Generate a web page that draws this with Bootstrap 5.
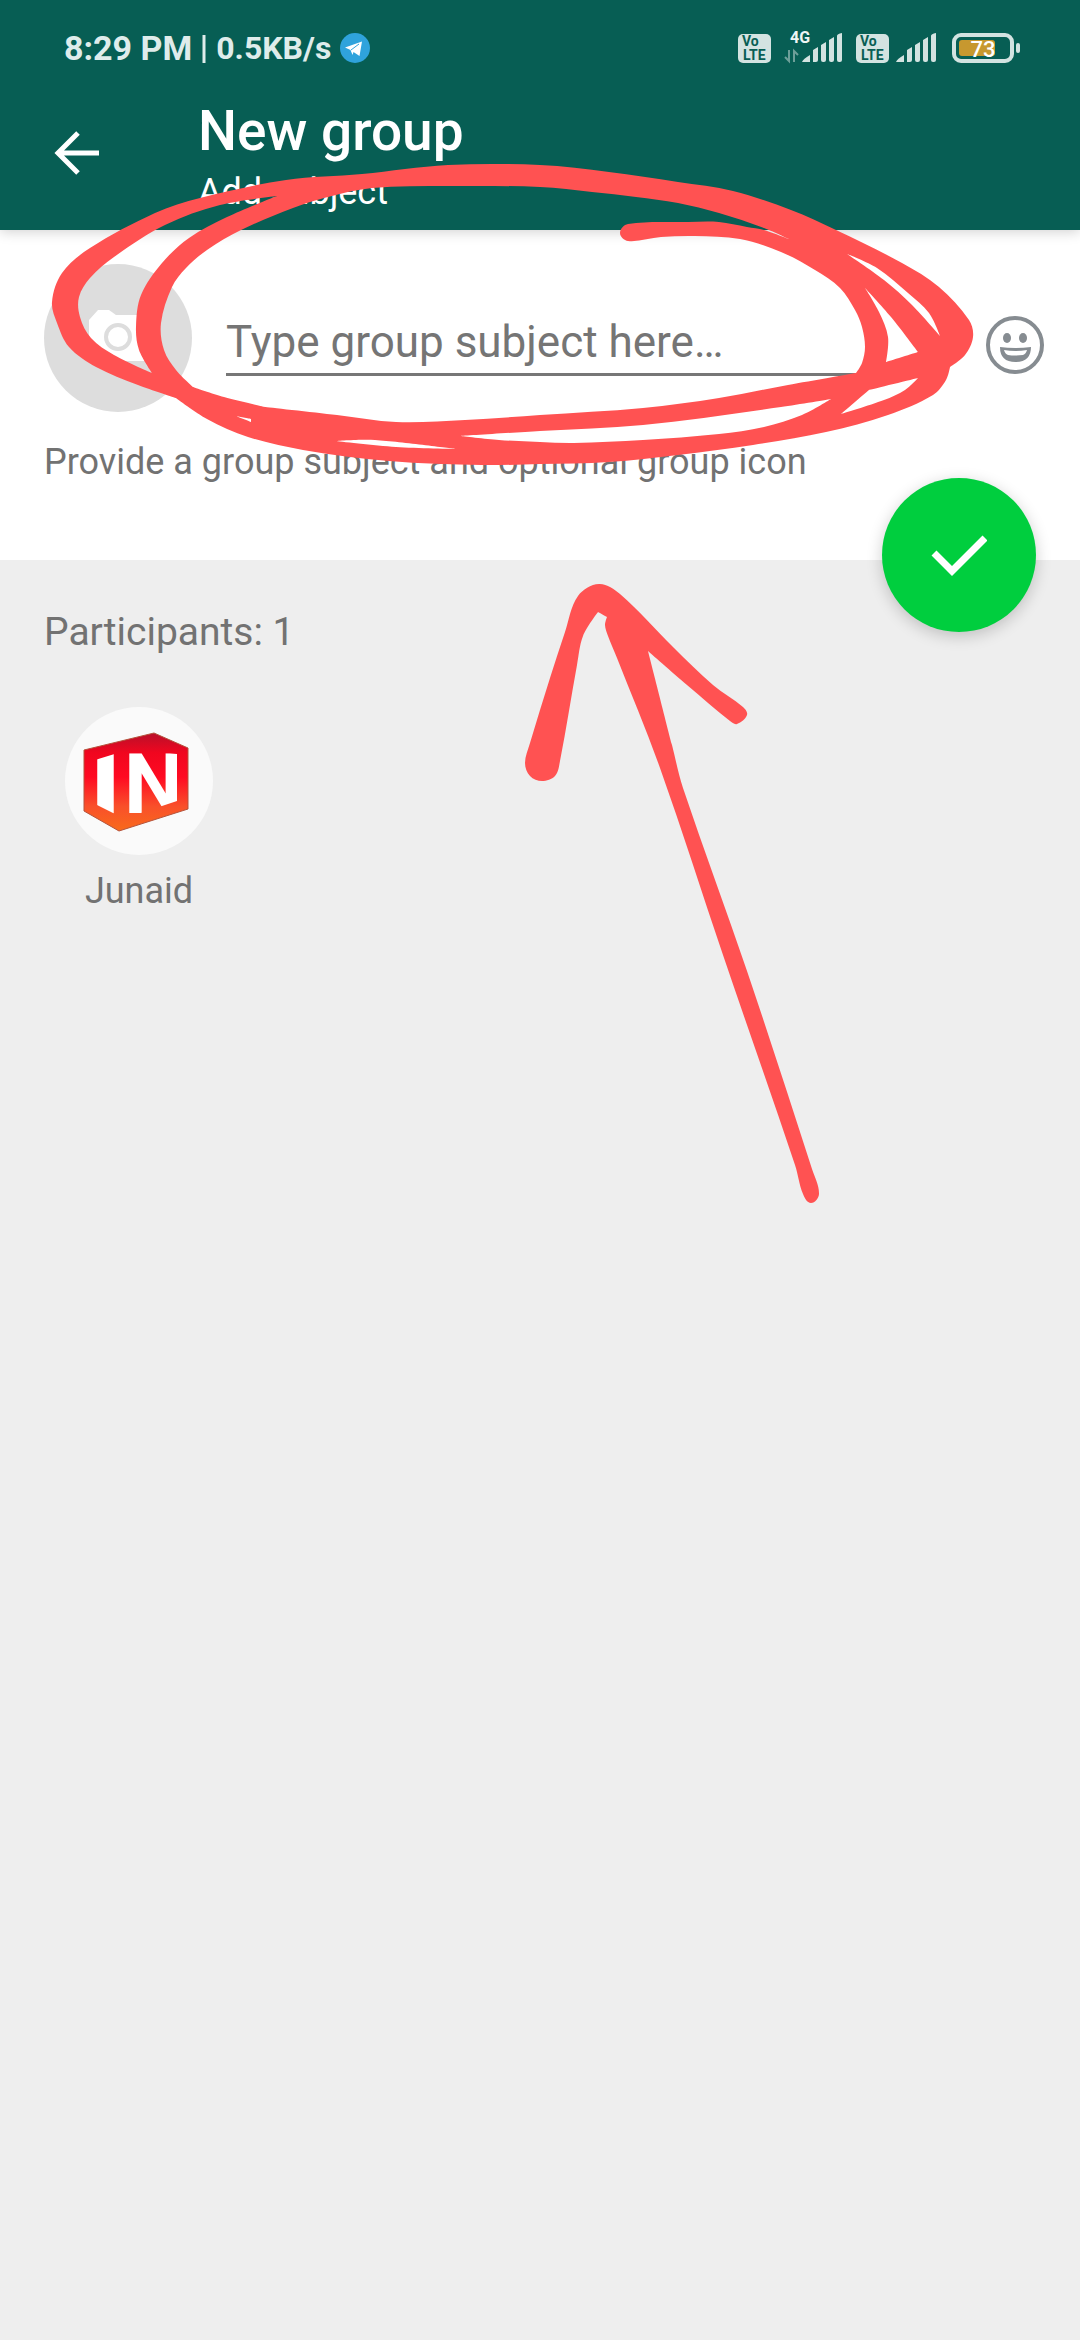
<!DOCTYPE html>
<html lang="en">
<head>
<meta charset="utf-8">
<meta name="viewport" content="width=device-width, initial-scale=1">
<title>New group</title>
<link href="https://cdn.jsdelivr.net/npm/bootstrap@5.3.0/dist/css/bootstrap.min.css" rel="stylesheet">
<style>
  body { font-family: Roboto, "Noto Sans", sans-serif; background: #eee; color: #727272; }
  svg { display: block; flex: none; }
  .app-top { background: #075e54; color: #fff; box-shadow: 0 2px 12px rgba(0,0,0,.18); z-index: 1; }
  .status-bar { height: 96px; padding: 0 58px 0 64px; color: #dfeceb; font-weight: 700; }
  .clock { font-size: 34px; }
  .net-speed { font-size: 32px; }
  .title-bar { padding: 0 44px 12px 40px; }
  .back-btn { width: 74px; height: 114px; padding: 0; border: 0; background: none; margin-right: 84px; }
  .bar-title { font-size: 55px; line-height: 70px; font-weight: 500; margin: 0; }
  .bar-sub { font-size: 36px; line-height: 52px; margin: 0; }
  .subject-panel { background: #fff; padding: 34px 36px 74px 44px; }
  .photo-btn { width: 148px; height: 148px; padding: 0; border: 0; background: #ddd; margin-right: 34px; }
  .subject-input { min-width: 0; height: 60px; padding: 0 0 6px; border: 0; border-bottom: 3px solid #777; border-radius: 0; background: none; font-size: 44px; line-height: 52px; color: #222; outline: 0; margin-right: 56px; }
  .subject-input::placeholder { color: #757575; opacity: 1; }
  .emoji-btn { padding: 0; border: 0; background: none; }
  .hint-text { font-size: 36px; line-height: 48px; margin: 26px 0 0; }
  .done-btn { position: absolute; right: 44px; bottom: -72px; width: 154px; height: 154px; border: 0; padding: 0; background: #00ce3e; box-shadow: 0 4px 16px rgba(0,0,0,.2); z-index: 1; }
  .people { padding: 48px 44px; }
  .people-title { font-size: 39px; line-height: 48px; font-weight: 400; margin: 0 0 51px; }
  .person { width: 190px; gap: 14px; font-size: 36px; line-height: 44px; }
  .markup { position: absolute; left: 0; top: 0; pointer-events: none; z-index: 2; }
</style>
</head>
<body>
<div class="position-relative min-vh-100">
  <header class="app-top position-relative">
    <div class="status-bar d-flex align-items-center">
      <span class="clock">8:29 PM</span>
      <svg width="24" height="30"><path d="M12 2v28" stroke="#dfeceb" stroke-width="3"/></svg>
      <span class="net-speed">0.5KB/s</span>
      <svg class="ms-2" width="32" height="32" viewBox="0 0 32 32"><circle cx="16" cy="16" r="15" fill="#2fa3dc"/><path d="M6 15.500 23 9.500 20.500 24 14.500 20l-1 3-2-5z" fill="#fff"/><path d="m12 18 8-6" stroke="#2fa3dc" stroke-width="1"/></svg>
      <svg class="ms-auto" width="284" height="40" viewBox="738 28 284 40" fill="#d3e3e1" role="img" aria-label="Signal and battery">
        <defs>
          <g id="bars"><path d="M0 62q1-3 8-7v7zM11 50l5-3v13q0 2-2 2h-3zM19 45l5-3v18q0 2-2 2h-1q-2 0-2-2zM27 40l5-3v23q0 2-2 2h-1q-2 0-2-2zM35 36q0-2 5-3v27q0 2-2 2h-1q-2 0-2-2z"/></g>
          <g id="volte"><rect y="34" width="33" height="29" rx="5"/><text x="4" y="46" font-size="14" font-weight="700" fill="#075e54">Vo</text><text x="5" y="60" font-size="14" font-weight="700" fill="#075e54">LTE</text></g>
        </defs>
        <use href="#volte" x="738"/>
        <text x="790" y="43" font-size="16" font-weight="700" fill="#eef6f5">4G</text>
        <path d="M789 50v11l-4-4M794 62V51l4 4" fill="none" stroke="#6d9f99" stroke-width="2"/>
        <use href="#bars" x="802"/>
        <use href="#volte" x="856"/>
        <use href="#bars" x="896"/>
        <rect x="954" y="35" width="58" height="26" rx="7" fill="none" stroke="#d3e3e1" stroke-width="4"/>
        <rect x="1016" y="43" width="4" height="10" rx="2"/>
        <rect x="959" y="40" width="36" height="16" rx="3" fill="#c7982f"/>
        <text x="983" y="57" font-size="22" font-weight="500" text-anchor="middle" fill="#fff">73</text>
      </svg>
    </div>
    <div class="title-bar d-flex align-items-start">
      <button class="back-btn d-flex align-items-center justify-content-center" type="button" aria-label="Back">
        <svg width="46" height="46" viewBox="0 0 46 46" fill="none" stroke="#fff" stroke-width="5"><path d="M24 3 4 23l20 20M4 23h41"/></svg>
      </button>
      <div>
        <h1 class="bar-title">New group</h1>
        <p class="bar-sub">Add subject</p>
      </div>
    </div>
  </header>

  <main>
    <section class="subject-panel position-relative">
      <div class="d-flex align-items-center">
        <button class="photo-btn rounded-circle flex-shrink-0" type="button" aria-label="Group icon">
          <svg width="148" height="148" viewBox="0 0 148 148"><path d="M45 56l9-10h11l7 5h27q5 0 5 5v36q0 5-5 5H50q-5 0-5-5z" fill="#fff"/><circle cx="74" cy="73" r="12" fill="none" stroke="#ddd" stroke-width="4"/></svg>
        </button>
        <div class="d-flex align-items-start flex-grow-1 pt-3">
          <input class="subject-input flex-grow-1" type="text" aria-label="Group subject" placeholder="Type group subject here…">
          <button class="emoji-btn" type="button" aria-label="Emoji">
            <svg width="58" height="58" viewBox="0 0 58 58" fill="#868c91"><circle cx="29" cy="29" r="27" fill="none" stroke="#868c91" stroke-width="4"/><ellipse cx="21" cy="22" rx="4" ry="5"/><ellipse cx="37" cy="22" rx="4" ry="5"/><path d="M14 31q15 2 31 0 0 15-15.500 15T14 31z"/><path d="M18 34q11 2 23 0-1 4-4 5-8 1-15 0-3-1-4-5z" fill="#fff"/></svg>
          </button>
        </div>
      </div>
      <p class="hint-text">Provide a group subject and optional group icon</p>
      <button class="done-btn rounded-circle d-flex align-items-center justify-content-center" type="button" aria-label="Create group">
        <svg width="56" height="44" viewBox="0 0 56 44"><path d="M3 20 21 38 54 5" fill="none" stroke="#fff" stroke-width="7"/></svg>
      </button>
    </section>

    <section class="people">
      <h2 class="people-title">Participants: 1</h2>
      <div class="d-flex">
        <div class="person d-flex flex-column align-items-center">
          <svg width="148" height="148" viewBox="65 167 148 148" role="img" aria-label="Junaid's photo">
            <defs>
              <linearGradient id="fire" x1="0" y1="0" x2="0" y2="1"><stop offset="0" stop-color="#b8102a"/><stop offset=".2" stop-color="#f0061f"/><stop offset=".45" stop-color="#ff0a22"/><stop offset=".75" stop-color="#f9502a"/><stop offset="1" stop-color="#f86a1b"/></linearGradient>
              <clipPath id="slant"><path d="M95 220 134 208 177 214V261L129 277 113 273 95 264z"/></clipPath>
            </defs>
            <circle cx="139" cy="241" r="74" fill="#fafafa"/>
            <path d="M84 210 154 193 188 208V269L119 291 84 271z" fill="url(#fire)" stroke="#b5533c" stroke-width="1"/>
            <g clip-path="url(#slant)" fill="#fff"><text x="91" y="276" font-size="96" font-weight="900">I</text><text x="124" y="273" font-size="84" font-weight="700">N</text></g>
          </svg>
          <span>Junaid</span>
        </div>
      </div>
    </section>
  </main>

  <svg class="markup" width="1080" height="1240" viewBox="0 0 1080 1240" aria-hidden="true"><path id="ink" fill="#ff5252" fill-rule="evenodd"/></svg>
</div>
<script src="https://cdn.jsdelivr.net/npm/bootstrap@5.3.0/dist/js/bootstrap.bundle.min.js"></script>
<script>
  // Closed brush contours: "x,y" is a smooth point, "x,y!" a sharp corner.
  const contours = [
    // outside edge of the ring
    "540,165 448,165 362,174 286,180 200,198 155,213 90,248 62,273 52,302 57,323 69,347 96,367 138,385 176,398! 207,419 248,437 303,450 389,461 482,465 540,464 609,462 678,455 753,445 826,432 888,415 933,395 946,380 950,367! 965,355 973,337 969,320 939,287 902,263 836,230 791,210 733,191 678,182 609,172",
    // inside edge, with the loose tail
    "628,224 620,233 628,241 661,237 695,236 740,239 781,252 815,270 840,288 855,310 862,327 865,347 862,363 856,373! 788,385 719,398 643,408 540,415 465,420 396,422 337,415 265,407! 224,397 193,387! 176,370 164,350 161,323 172,287 186,268 207,250 241,230 293,208 324,198 372,188 448,186 540,187 592,192 636,197 678,203 719,213 764,228 791,240! 764,230 747,227 719,222 688,222",
    // gaps between the strokes
    "277,196! 220,205 165,225 114,257 90,278 79,297 80,317 91,338 114,355 152,373! 139,350 136,327 141,295 162,263 189,238 227,217",
    "236,416! 251,419! 251,422!",
    "336,441! 375,440 456,449! 396,447",
    "461,436! 540,431 643,425 781,407 831,399! 802,415 764,427 719,434 643,440 574,443 540,442 499,440",
    "918,378! 869,390! 841,414! 884,400 905,390",
    "886,362! 918,352! 891,317 865,288! 879,312 888,337",
    "847,254! 877,268 908,293 929,313 940,336! 912,305 884,280",
    // arrow
    "525,763 530,776 542,781 555,776 560,761 577,665 583,636 598,612! 607,617! 605,625 608,636 617,658 660,768 723,955 795,1165 803,1194 811,1203 819,1194 812,1169 747,971 683,788 672,745 648,651! 687,685 730,721 737,724 747,715 743,707 713,685 673,647 620,594 599,584 578,596 565,632 550,678 530,743"
  ];
  function smooth(list) {
    const p = list.split(" ").map(s => ({ c: s.endsWith("!"), v: s.replace("!", "").split(",").map(Number) }));
    const n = p.length;
    const len = (a, b) => Math.hypot(b[0] - a[0], b[1] - a[1]);
    // control handle at point i, aimed towards its neighbour
    const handle = (i, dir) => {
      const a = p[(i - dir + n) % n].v, m = p[i].v, b = p[(i + dir + n) % n].v;
      if (p[i].c) return m;
      const d = len(a, b), k = len(m, b) / 3;
      return [0, 1].map(j => +(m[j] + (b[j] - a[j]) / d * k).toFixed(1));
    };
    let d = "M" + p[0].v;
    for (let i = 0; i < n; i++) {
      const j = (i + 1) % n;
      d += "C" + handle(i, 1) + " " + handle(j, -1) + " " + p[j].v;
    }
    return d + "Z";
  }
  document.getElementById("ink").setAttribute("d", contours.map(smooth).join(""));
</script>
</body>
</html>
